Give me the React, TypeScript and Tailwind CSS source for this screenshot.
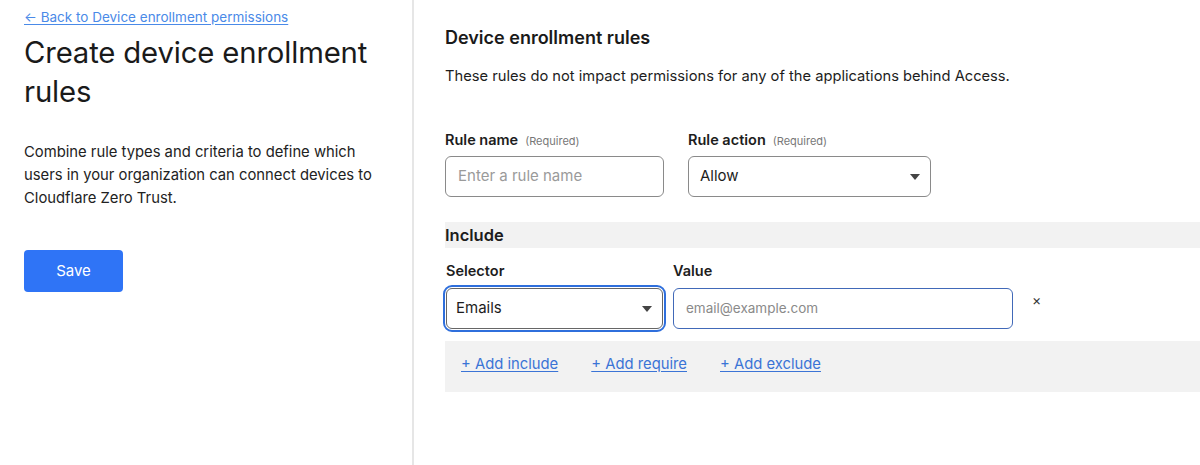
import React from "react";

const Caret = () => (
  <svg width="10" height="6" viewBox="0 0 10 6" className="shrink-0">
    <path d="M0 0 L10 0 L5 6 Z" fill="#444" />
  </svg>
);

export default function App() {
  return (
    <div
      className="flex w-[1200px] h-[465px] bg-white text-[#1d1d1d] overflow-hidden"
      style={{ fontFamily: "Inter, 'Noto Sans', sans-serif" }}
    >
      {/* Left panel */}
      <div className="w-[414px] shrink-0 border-r-2 border-[#e6e6e6] pl-6 pr-6 pt-[7px]">
        <a href="#" className="block text-[13.5px] leading-5 text-[#4a8ae8] underline underline-offset-2">
          ← Back to Device enrollment permissions
        </a>
        <h1 className="mt-[6px] text-[29.3px] leading-[39px] font-normal tracking-[-0.15px] text-[#1a1a1a]">
          Create device enrollment rules
        </h1>
        <p className="mt-[30px] text-[14.8px] leading-[23px] text-[#222] w-[360px]">
          Combine rule types and criteria to define which users in your organization can connect devices to
          Cloudflare Zero Trust.
        </p>
        <button className="mt-[40px] w-[99px] h-[42px] rounded-[4px] bg-[#2f74f6] text-white text-[15px]">
          Save
        </button>
      </div>

      {/* Right panel */}
      <div className="flex-1 pl-[31px] pt-[26px]">
        <h2 className="text-[18px] leading-6 font-semibold text-[#1a1a1a]">Device enrollment rules</h2>
        <p className="mt-[15px] text-[14.7px] leading-[22px] text-[#1d1d1d]">
          These rules do not impact permissions for any of the applications behind Access.
        </p>

        <div className="mt-[43px] flex gap-6">
          <div className="w-[219px]">
            <div className="flex items-baseline gap-[7px] leading-5">
              <span className="text-[14.5px] font-semibold">Rule name</span>
              <span className="text-[11px] text-[#777]">(Required)</span>
            </div>
            <div className="mt-[5px] h-[41px] rounded-[6px] border border-[#8a8a8a] px-3 flex items-center text-[15px] text-[#9a9a9a]">
              Enter a rule name
            </div>
          </div>
          <div className="w-[243px]">
            <div className="flex items-baseline gap-[7px] leading-5">
              <span className="text-[14.5px] font-semibold">Rule action</span>
              <span className="text-[11px] text-[#777]">(Required)</span>
            </div>
            <div className="mt-[5px] h-[41px] rounded-[6px] border border-[#8a8a8a] pl-[11px] pr-[10px] flex items-center justify-between text-[15px] text-[#1d1d1d]">
              <span>Allow</span>
              <Caret />
            </div>
          </div>
        </div>

        <div className="mt-[25px] h-[26px] bg-[#f2f2f2] flex items-center">
          <span className="text-[16.5px] font-semibold text-[#1d1d1d]">Include</span>
        </div>

        <div className="mt-[13px] flex">
          <div className="w-[217px] ml-px">
            <div className="text-[14.5px] font-semibold leading-5">Selector</div>
            <div className="mt-[7px] h-[41px] rounded-[6px] border border-[#666] outline-2 outline-offset-1 outline-[#2f6fdc] pl-[9px] pr-[10px] flex items-center justify-between text-[15px]">
              <span>Emails</span>
              <Caret />
            </div>
          </div>
          <div className="w-[340px] ml-[10px]">
            <div className="text-[14.5px] font-semibold leading-5">Value</div>
            <div className="mt-[7px] h-[41px] rounded-[6px] border border-[#4169b8] px-3 flex items-center text-[13.5px] text-[#8a8a8a]">
              email@example.com
            </div>
          </div>
          <div className="ml-[19px] pt-[28px] text-[14px] text-[#333]">×</div>
        </div>

        <div className="mt-[12px] h-[51px] bg-[#f2f2f2] flex items-center gap-[33px] pl-4 pb-[5px] text-[14.8px] text-[#3b74d6]">
          <a href="#" className="underline underline-offset-2">+ Add include</a>
          <a href="#" className="underline underline-offset-2">+ Add require</a>
          <a href="#" className="underline underline-offset-2">+ Add exclude</a>
        </div>
      </div>
    </div>
  );
}
